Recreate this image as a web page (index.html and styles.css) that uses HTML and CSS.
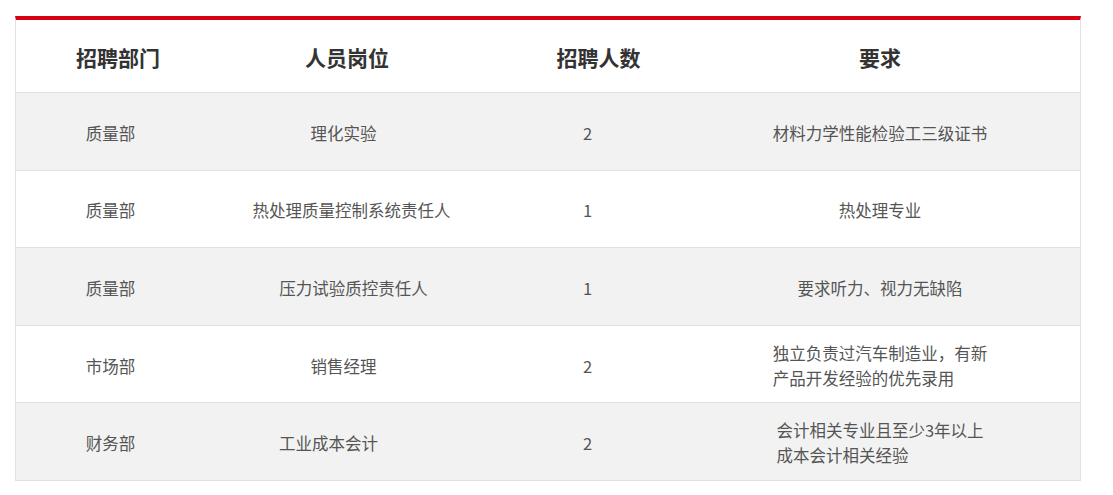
FILE: index.html
```html
<!DOCTYPE html>
<html lang="zh">
<head>
<meta charset="utf-8">
<title>招聘信息</title>
<link rel="stylesheet" href="styles.css">
</head>
<body>
<div class="jobs">
  <div class="row head">
    <div class="cell">招聘部门</div>
    <div class="cell">人员岗位</div>
    <div class="cell">招聘人数</div>
    <div class="cell last">要求</div>
  </div>
  <div class="row body alt">
    <div class="cell">质量部</div>
    <div class="cell pos-r7">理化实验</div>
    <div class="cell">2</div>
    <div class="cell last">材料力学性能检验工三级证书</div>
  </div>
  <div class="row body">
    <div class="cell">质量部</div>
    <div class="cell pos-l9">热处理质量控制系统责任人</div>
    <div class="cell">1</div>
    <div class="cell last">热处理专业</div>
  </div>
  <div class="row body alt">
    <div class="cell">质量部</div>
    <div class="cell pos-l13">压力试验质控责任人</div>
    <div class="cell">1</div>
    <div class="cell last">要求听力、视力无缺陷</div>
  </div>
  <div class="row body">
    <div class="cell">市场部</div>
    <div class="cell pos-r7">销售经理</div>
    <div class="cell">2</div>
    <div class="cell last"><span class="block">独立负责过汽车制造业，有新<br>产品开发经验的优先录用</span></div>
  </div>
  <div class="row body alt">
    <div class="cell">财务部</div>
    <div class="cell pos-r37">工业成本会计</div>
    <div class="cell">2</div>
    <div class="cell last"><span class="block">会计相关专业且至少3年以上<br>成本会计相关经验</span></div>
  </div>
</div>
</body>
</html>
```

FILE: styles.css
```css
html, body {
  margin: 0;
  padding: 0;
  background: #ffffff;
}

body {
  padding: 16px 0 0 15px;
  font-family: "Noto Sans CJK SC", "Noto Sans", sans-serif;
}

.jobs {
  width: 1066px;
  box-sizing: border-box;
  border-top: 4px solid #d7000f;
  border-left: 1px solid #e2e2e2;
  border-right: 1px solid #e2e2e2;
}

.row {
  display: grid;
  align-items: center;
  box-sizing: border-box;
  border-bottom: 1px solid #e0e0e0;
}

.cell {
  text-align: center;
}

.head {
  grid-template-columns: 204px 254px 249px 1fr;
  height: 73px;
  padding-top: 2px;
  font-size: 21px;
  font-weight: 700;
  color: #333333;
}

.head .last {
  padding-right: 43px;
}

.body {
  grid-template-columns: 189px 284px 197px 1fr;
  height: 77.6px;
  padding-top: 3px;
  font-size: 16.5px;
  color: #555555;
}

.body .last {
  padding-right: 6px;
}

.pos-r7 { padding-right: 7px; }
.pos-r37 { padding-right: 37px; }
.pos-l9 { padding-left: 9px; }
.pos-l13 { padding-left: 13px; }

.alt {
  background: #f2f2f2;
}

.block {
  display: inline-block;
  text-align: left;
  line-height: 25px;
}
```
